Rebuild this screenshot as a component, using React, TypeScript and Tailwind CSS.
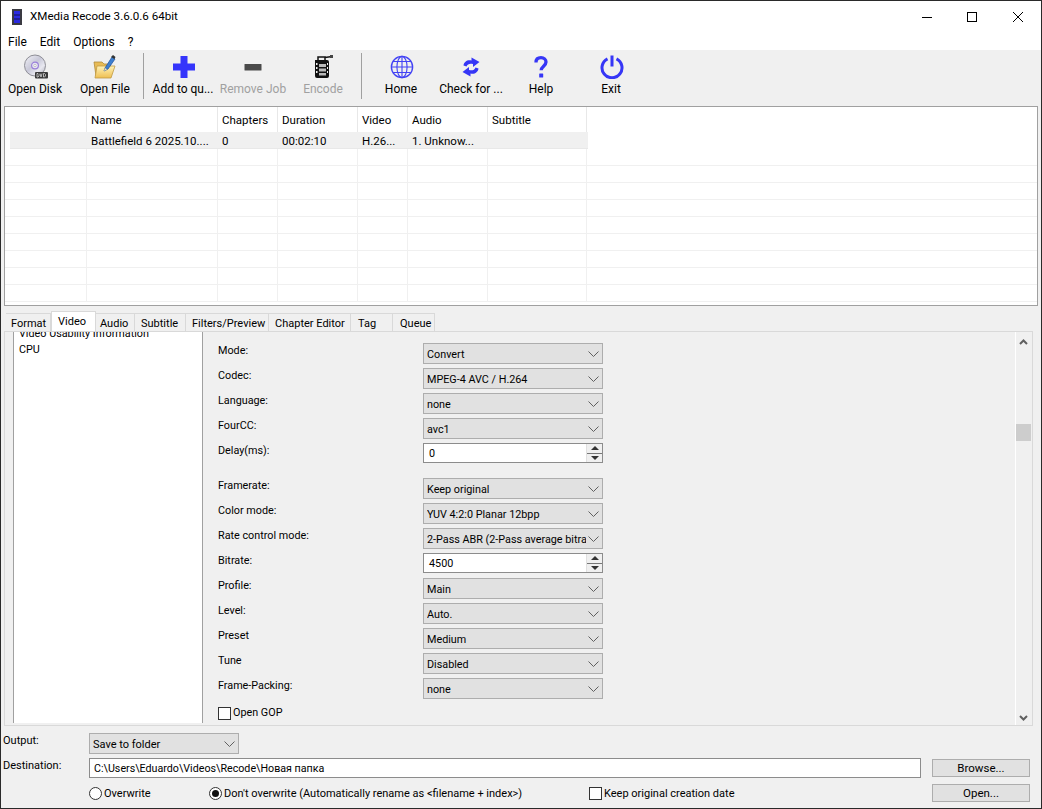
import React from "react";

const Disk = () => (
  <svg width="26" height="26" viewBox="0 0 26 26" className="ml-[2px]">
    <defs>
      <linearGradient id="cd" x1="0" y1="0" x2="1" y2="1">
        <stop offset="0" stopColor="#f4f4f8" />
        <stop offset="0.45" stopColor="#c8c8d8" />
        <stop offset="0.7" stopColor="#e8e8f0" />
        <stop offset="1" stopColor="#a8a8b4" />
      </linearGradient>
    </defs>
    <circle cx="12" cy="11.5" r="10.5" fill="url(#cd)" stroke="#8e8e96" strokeWidth="1" />
    <circle cx="12" cy="11.5" r="3.4" fill="#e8e4f4" stroke="#9a80d8" strokeWidth="1.2" />
    <circle cx="12" cy="11.5" r="1.2" fill="#fff" stroke="#999" strokeWidth="0.5" />
    <rect x="12" y="18" width="13" height="6.5" rx="1" fill="#3a3a3a" />
    <path d="M14 19.5v3.5M14 19.5h1l1 1v1.5l-1 1h-1M17 19.5l1 3.5 1-3.5M20.5 19.5v3.5M20.5 19.5h1l1 1v1.5l-1 1h-1" stroke="#e8e8e8" strokeWidth="0.7" fill="none" />
  </svg>
);

const Folder = () => (
  <svg width="26" height="26" viewBox="0 0 26 26">
    <defs>
      <linearGradient id="fo" x1="0" y1="0" x2="0" y2="1">
        <stop offset="0" stopColor="#fff2b8" />
        <stop offset="1" stopColor="#eebf52" />
      </linearGradient>
    </defs>
    <path d="M2 8h8l2 2h6v12H4z" fill="#e8bb55" stroke="#b08a3a" strokeWidth="0.8" />
    <path d="M5 12h18l-4 12H3z" fill="url(#fo)" stroke="#c09a44" strokeWidth="0.8" />
    <path d="M13 14L20 3l3 2-7 10-4 2z" fill="#3d7fd0" stroke="#1d4f99" strokeWidth="0.7" />
    <path d="M19 3l2-2 2.5 2-1 2z" fill="#333" />
    <path d="M12 17l1-3 2 1.4z" fill="#f4e0b0" />
  </svg>
);

const Plus = () => (
  <svg width="24" height="24" viewBox="0 0 24 24" className="ml-[2px]">
    <path d="M8.500 1h7v7.500H23v7h-7.500V23h-7v-7.500H1v-7h7.500z" fill="#3535fb" />
  </svg>
);

const Minus = () => (
  <svg width="24" height="24" viewBox="0 0 24 24">
    <rect x="3.500" y="9" width="17" height="6.500" rx="0.5" fill="#4a4a4a" />
  </svg>
);

const Film = () => (
  <svg width="24" height="26" viewBox="0 0 24 26">
    <path d="M4 6h12a2 2 0 0 1 2 2v14a2 2 0 0 1-2 2H6a2 2 0 0 1-2-2z" fill="#111" />
    <path d="M7 6V3h7v3M14 3.500l7-1" stroke="#111" strokeWidth="1.500" fill="none" />
    <rect x="19" y="1" width="3" height="3" fill="#444" />
    <path d="M8 10h7v3H8zM8 14.500h7v3H8zM8 19h7v2.500H8z" fill="#b9b9b9" />
    <path d="M5 9h1.500v2H5zM5 13h1.500v2H5zM5 17h1.500v2H5zM16 9h1v2h-1zM16 13h1v2h-1zM16 17h1v2h-1z" fill="#eee" />
  </svg>
);

const Globe = () => (
  <svg width="24" height="24" viewBox="0 0 26 26" fill="none" stroke="#4343f4" strokeWidth="1.200" className="ml-[1px]">
    <circle cx="13" cy="13" r="11.500" strokeWidth="1.500" />
    <ellipse cx="13" cy="13" rx="5.500" ry="11.500" />
    <path d="M13 1.500v23M1.500 13h23M3.500 7h19M3.500 19h19" />
  </svg>
);

const Sync = () => (
  <svg width="20" height="24" viewBox="0 0 20 24" fill="#3636f6">
    <path d="M2.500 10.500C3 6.500 6.500 4.500 10.500 5.500V2.500L18.500 7l-6.500 5V9c-3-.8-5.500-.2-6.500 2.500z" />
    <path d="M17.500 13.500C17 17.500 13.500 19.500 9.500 18.500v3L1.500 17l6.500-5v3c3 .8 5.500.2 6.500-2.500z" />
  </svg>
);

const Question = () => (
  <svg width="16" height="24" viewBox="0 0 16 24" fill="none">
    <path d="M3 7.500C3 4 5.200 2.700 8 2.700c3 0 5 1.800 5 4.300 0 4-4.800 4.300-4.800 8.300" stroke="#3636f6" strokeWidth="3.300" />
    <rect x="6.200" y="18.500" width="4" height="4" rx="0.500" fill="#3636f6" />
  </svg>
);

const Power = () => (
  <svg width="24" height="24" viewBox="0 0 24 24" fill="none" stroke="#3636f6" strokeWidth="3" className="ml-[1px]">
    <path d="M7.500 3.800a10 10 0 1 0 9 0" />
    <path d="M12 0.500v11" />
  </svg>
);

const AppIcon = () => (
  <svg width="10" height="16" viewBox="0 0 10 16">
    <rect x="0" y="0" width="10" height="16" fill="#3a3a42" />
    <rect x="2" y="2" width="6" height="12" fill="#2a2ae0" />
    <path d="M2 6h6M2 10h6" stroke="#12124a" strokeWidth="1" />
  </svg>
);

const Chevron = () => (
  <svg width="11" height="6" viewBox="0 0 11 6" fill="none" stroke="#606060" strokeWidth="1">
    <path d="M0.500 0.500l5 5 5-5" />
  </svg>
);

const tools: { label: string; icon: React.ReactNode; off?: boolean; sep?: boolean }[] = [
  { label: "Open Disk", icon: <Disk /> },
  { label: "Open File", icon: <Folder />, sep: true },
  { label: "Add to qu...", icon: <Plus /> },
  { label: "Remove Job", icon: <Minus />, off: true },
  { label: "Encode", icon: <Film />, off: true, sep: true },
  { label: "Home", icon: <Globe /> },
  { label: "Check for ...", icon: <Sync /> },
  { label: "Help", icon: <Question /> },
  { label: "Exit", icon: <Power /> },
];

const cols = [
  { w: "w-[82px]", h: "", c: "" },
  { w: "w-[131px]", h: "Name", c: "Battlefield 6 2025.10...." },
  { w: "w-[60px]", h: "Chapters", c: "0" },
  { w: "w-[80px]", h: "Duration", c: "00:02:10" },
  { w: "w-[50px]", h: "Video", c: "H.26..." },
  { w: "w-[80px]", h: "Audio", c: "1. Unknow..." },
  { w: "w-[99px]", h: "Subtitle", c: "" },
];

const tabs = [
  { t: "Format", w: "w-[45px] pl-[5px]" },
  { t: "Video", w: "w-[45px] pl-[6px]", on: true },
  { t: "Audio", w: "w-[39px] pl-[4px]" },
  { t: "Subtitle", w: "w-[51px] pl-[6px]" },
  { t: "Filters/Preview", w: "w-[83px] pl-[6px]" },
  { t: "Chapter Editor", w: "w-[82px] pl-[6px]" },
  { t: "Tag", w: "w-[42px] pl-[7px]" },
  { t: "Queue", w: "w-[42px] pl-[7px]" },
];

const Select = ({ v, w = "w-[180px]" }: { v: string; w?: string }) => (
  <div className={`${w} h-[21px] flex items-center justify-between bg-[#e1e1e1] border border-[#adadad] pl-[3px] pr-[3px] overflow-hidden`}>
    <span className="whitespace-nowrap overflow-hidden flex-1 pt-[2px]">{v}</span>
    <span className="bg-[#e1e1e1] pl-[2px] shrink-0"><Chevron /></span>
  </div>
);

const Spin = ({ v }: { v: string }) => (
  <div className="w-[180px] h-[20px] flex border border-[#8c8c8c] bg-white">
    <span className="flex-1 pl-[5px] leading-[20px]">{v}</span>
    <div className="w-[16px] bg-[#f0f0f0] flex flex-col border-l border-[#e0e0e0]">
      <div className="flex-1 flex items-center justify-center">
        <span className="w-0 h-0 border-x-[4px] border-x-transparent border-b-[4px] border-b-[#333]" />
      </div>
      <div className="h-px bg-[#777]" />
      <div className="flex-1 flex items-center justify-center">
        <span className="w-0 h-0 border-x-[4px] border-x-transparent border-t-[4px] border-t-[#333]" />
      </div>
    </div>
  </div>
);

const Row = ({ label, children }: { label: string; children: React.ReactNode }) => (
  <div className="h-[25px] flex">
    <div className="w-[205px] pt-[2px] leading-[16px]">{label}</div>
    <div className="pt-[2px]">{children}</div>
  </div>
);

const Radio = ({ on }: { on?: boolean }) => (
  <span className="w-[13px] h-[13px] rounded-full border border-[#333] bg-white flex items-center justify-center shrink-0">
    {on && <span className="w-[7px] h-[7px] rounded-full bg-[#111]" />}
  </span>
);

const Btn = ({ t }: { t: string }) => (
  <div className="w-[98px] h-[18px] bg-[#e1e1e1] border border-[#adadad] flex items-center justify-center text-[11.5px]">{t}</div>
);

export default function App() {
  return (
    <div className="w-[1042px] h-[809px] flex flex-col overflow-hidden bg-[#f0f0f0] text-[12px] leading-[16px] text-black border border-[#2a2a2a] font-['Roboto','Noto_Sans',sans-serif]">
      <div className="h-[31px] bg-white flex items-center pl-[11px] shrink-0">
        <AppIcon />
        <span className="ml-[8px] mb-[2px] flex-1 text-[11.6px]">XMedia Recode 3.6.0.6 64bit</span>
        <svg width="101" height="14" viewBox="0 0 101 14" fill="none" stroke="#000" strokeWidth="1" className="mr-[18px]">
          <path d="M0 7.500h10" />
          <rect x="45.500" y="2.500" width="9" height="9" />
          <path d="M91 2l10 10M101 2L91 12" />
        </svg>
      </div>
      <div className="h-[18px] bg-white flex items-center pl-[7px] gap-[13px] shrink-0 pt-px">
        <span>File</span>
        <span>Edit</span>
        <span>Options</span>
        <span>?</span>
      </div>
      <div className="h-[56px] flex shrink-0 pt-[3px] -ml-px">
        {tools.map((t) => (
          <React.Fragment key={t.label}>
            <div className={`w-[70px] h-[46px] flex flex-col items-center ${t.off ? "text-[#a0a0a0]" : ""}`}>
              <div className="h-[28px] flex items-center justify-center">{t.icon}</div>
              <span className="whitespace-nowrap">{t.label}</span>
            </div>
            {t.sep && <div className="w-px h-[46px] bg-[#a0a0a0] ml-[3px] mr-[4px]" />}
          </React.Fragment>
        ))}
      </div>

      <div className="mx-[3px] h-[200px] shrink-0 bg-white border border-[#a0a0a0] overflow-hidden text-[11.5px]">
        <div className="h-[25px] flex">
          {cols.map((c, i) => (
            <div key={i} className={`${c.w} border-r border-[#e8e8e8] pl-[4px] pt-[5px]`}>{c.h}</div>
          ))}
        </div>
        <div className="h-[17px] ml-[5px] w-[578px] flex bg-[#f0f0f0] border-b border-[#e8e8e8]">
          {cols.map((c, i) => (
            <div key={i} className={`${i === 0 ? "w-[77px]" : c.w} pl-[4px] pt-px whitespace-nowrap`}>{c.c}</div>
          ))}
        </div>
        {Array.from({ length: 9 }).map((_, r) => (
          <div key={r} className="h-[17px] flex border-b border-[#f0f0f0]">
            {cols.map((c, i) => (
              <div key={i} className={`${c.w} border-r border-[#f0f0f0]`} />
            ))}
          </div>
        ))}
      </div>

      <div className="h-[20px] mt-[5px] flex items-end pl-[5px] shrink-0 text-[11px]">
        {tabs.map((t) => (
          <div
            key={t.t}
            className={
              t.on
                ? `${t.w} h-[20px] bg-white border border-b-0 border-[#d9d9d9] pt-[2px] whitespace-nowrap`
                : `${t.w} h-[18px] bg-[#f0f0f0] border border-b-0 border-l-0 border-[#d9d9d9] pt-[2px] whitespace-nowrap`
            }
          >
            {t.t}
          </div>
        ))}
      </div>

      <div className="mx-[3px] w-[1029px] h-[395px] shrink-0 border border-[#d9d9d9] bg-[#f0f0f0] flex text-[10.8px]">
        <div className="ml-[8px] mb-[2px] w-[190px] h-[391px] bg-white border-x border-[#a0a0a0] overflow-hidden pl-[5px] shrink-0">
          <div className="-mt-[6px] leading-[16px] whitespace-nowrap">Video Usability Information</div>
          <div className="leading-[16px]">CPU</div>
        </div>
        <div className="flex-1 pl-[15px] pt-[9px] flex flex-col">
          <Row label="Mode:"><Select v="Convert" /></Row>
          <Row label="Codec:"><Select v="MPEG-4 AVC / H.264" /></Row>
          <Row label="Language:"><Select v="none" /></Row>
          <Row label="FourCC:"><Select v="avc1" /></Row>
          <Row label="Delay(ms):"><Spin v="0" /></Row>
          <div className="h-[10px]" />
          <Row label="Framerate:"><Select v="Keep original" /></Row>
          <Row label="Color mode:"><Select v="YUV 4:2:0 Planar 12bpp" /></Row>
          <Row label="Rate control mode:"><Select v="2-Pass ABR (2-Pass average bitrate)" /></Row>
          <Row label="Bitrate:"><Spin v="4500" /></Row>
          <Row label="Profile:"><Select v="Main" /></Row>
          <Row label="Level:"><Select v="Auto." /></Row>
          <Row label="Preset"><Select v="Medium" /></Row>
          <Row label="Tune"><Select v="Disabled" /></Row>
          <Row label="Frame-Packing:"><Select v="none" /></Row>
          <div className="flex items-center gap-[2px] mt-[4px]">
            <span className="w-[13px] h-[13px] border border-[#333] bg-white" />
            <span>Open GOP</span>
          </div>
        </div>
        <div className="w-[17px] pr-px border-l border-white flex flex-col items-center relative shrink-0">
          <svg width="9" height="6" viewBox="0 0 9 6" fill="none" stroke="#606060" strokeWidth="2" className="mt-[7px]">
            <path d="M1 5l3.500-3.500L8 5" />
          </svg>
          <div className="w-[15px] h-[17px] bg-[#cdcdcd] mt-[79px] self-start" />
          <div className="flex-1" />
          <svg width="9" height="6" viewBox="0 0 9 6" fill="none" stroke="#606060" strokeWidth="2" className="mb-[4px]">
            <path d="M1 1l3.500 3.500L8 1" />
          </svg>
        </div>
      </div>

      <div className="flex pt-[7px] h-[25px] box-content shrink-0 text-[11px]">
        <div className="w-[88px] pl-[2px]">Output:</div>
        <Select v="Save to folder" w="w-[150px]" />
      </div>
      <div className="flex h-[26px] shrink-0 text-[11px]">
        <div className="w-[88px] pl-[2px]">Destination:</div>
        <div className="w-[832px] h-[20px] border border-[#8c8c8c] bg-white pl-[4px] leading-[18px] pt-px text-[10.7px]">C:\Users\Eduardo\Videos\Recode\Новая папка</div>
        <div className="ml-[11px] mt-px"><Btn t="Browse..." /></div>
      </div>
      <div className="flex h-[18px] items-center shrink-0 pl-[88px] text-[11px]">
        <Radio />
        <span className="ml-[2px] w-[105px] pt-px">Overwrite</span>
        <Radio on />
        <span className="ml-[2px] w-[365px] whitespace-nowrap pt-px">Don't overwrite (Automatically rename as &lt;filename + index&gt;)</span>
        <span className="w-[13px] h-[13px] border border-[#333] bg-white shrink-0" />
        <span className="ml-[2px] w-[328px] whitespace-nowrap pt-px">Keep original creation date</span>
        <Btn t="Open..." />
      </div>
    </div>
  );
}
